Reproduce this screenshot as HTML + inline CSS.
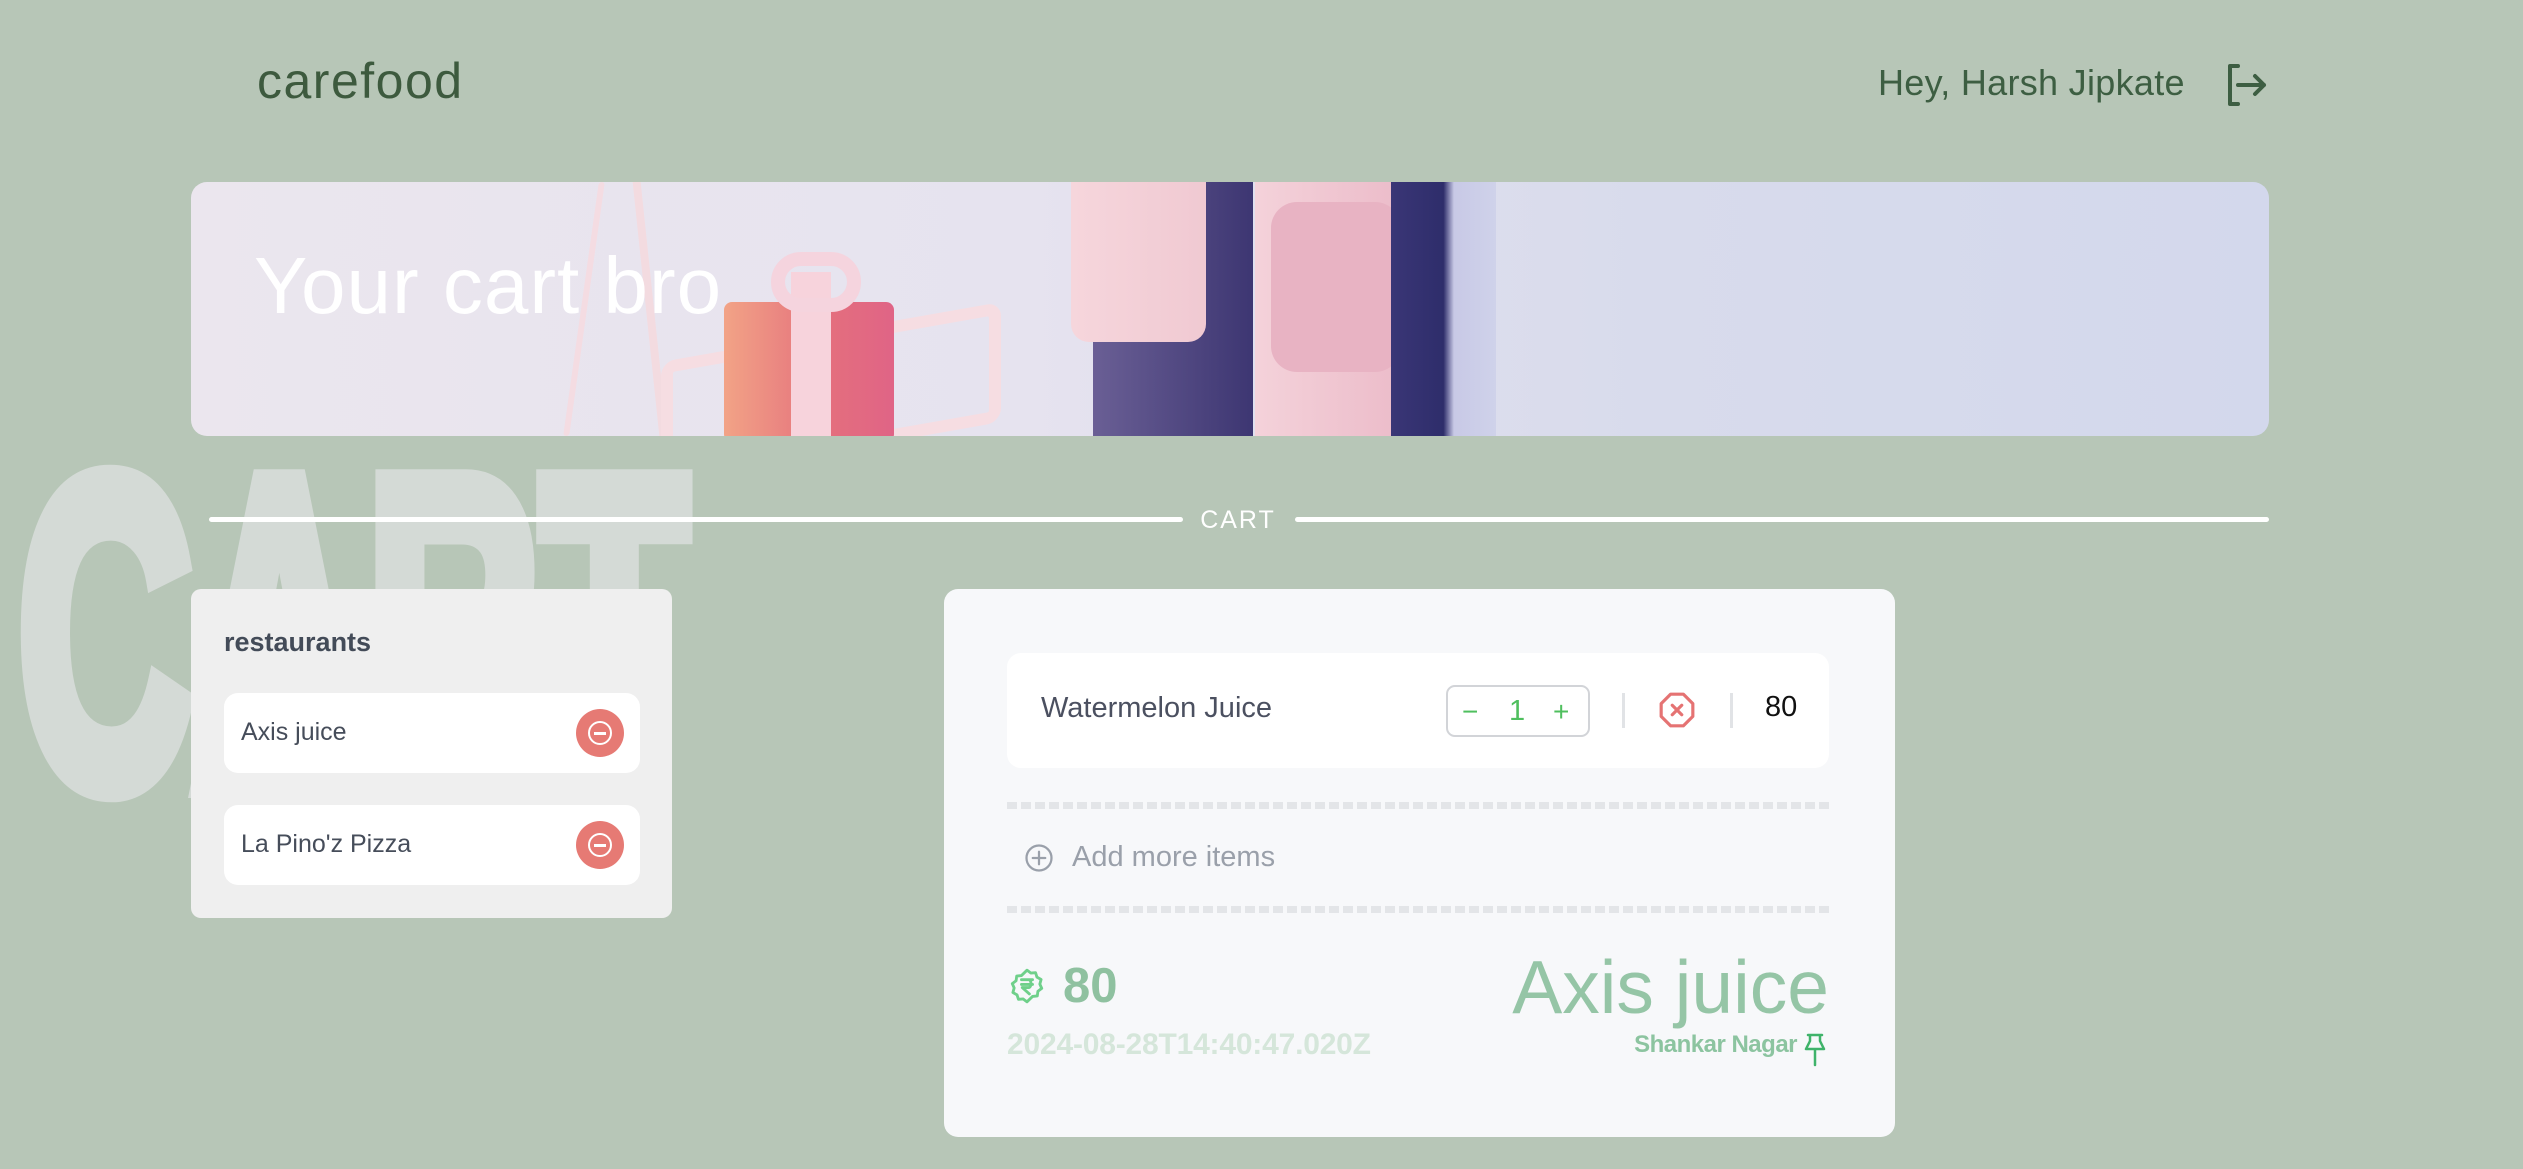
<!DOCTYPE html>
<html><head><meta charset="utf-8">
<style>
*{margin:0;padding:0;box-sizing:border-box}
body{width:2523px;height:1169px;background:#b7c6b7;font-family:"Liberation Sans",sans-serif;position:relative;overflow:hidden}
.abs{position:absolute}
.logo{left:257px;top:52px;font-size:50px;color:#3d5a3e;letter-spacing:1.5px}
.hey{left:1878px;top:62px;font-size:36px;color:#3d5e42;letter-spacing:0.3px}
.banner{left:191px;top:182px;width:2078px;height:254px;border-radius:16px;overflow:hidden;background:linear-gradient(90deg,#ebe6ee 0%,#e6e3ef 40%,#d8dbec 70%,#d3d8ec 100%)}
.banner h1{position:absolute;left:63px;top:58px;font-size:80px;font-weight:normal;color:#fff;letter-spacing:1px}
.line{height:5px;background:#fff;border-radius:3px;top:517px}
.carttxt{left:1200px;top:506px;width:76px;text-align:center;color:#fff;font-size:25px;letter-spacing:2px}
.rcard{left:191px;top:589px;width:481px;height:329px;background:#efefef;border-radius:10px}
.rcard h3{position:absolute;left:33px;top:38px;font-size:27px;color:#434b58}
.ritem{position:absolute;left:33px;width:416px;height:80px;background:#fff;border-radius:14px}
.ritem span{position:absolute;left:17px;top:25px;font-size:25px;color:#464d5a}
.ritem i{position:absolute;left:352px;top:16px;width:48px;height:48px;border-radius:50%;background:#e67a74}
.ritem i:before{content:"";position:absolute;left:12px;top:12px;width:20px;height:20px;border:2.5px solid #fff;border-radius:50%}
.ritem i:after{content:"";position:absolute;left:18px;top:22.5px;width:12px;height:3px;background:#fff}
.mcard{left:944px;top:589px;width:951px;height:548px;background:#f7f8fa;border-radius:14px}
.row{left:1007px;top:653px;width:822px;height:115px;background:#fff;border-radius:14px}
.dash{height:7px;left:1007px;width:822px;background:repeating-linear-gradient(90deg,#e3e5e8 0 10px,transparent 10px 14px)}
</style></head><body>
<svg class="abs" style="left:0;top:0" width="760" height="830"><text x="18" y="785" font-family="Liberation Sans" font-weight="bold" font-size="440" fill="#d4dad6" stroke="#d4dad6" stroke-width="26" stroke-linejoin="miter" textLength="670" lengthAdjust="spacingAndGlyphs">CART</text></svg>
<div class="abs logo">carefood</div>
<div class="abs hey">Hey, Harsh Jipkate</div>
<svg class="abs" style="left:2224px;top:63px" width="44" height="44" viewBox="0 0 44 44" fill="none" stroke="#3d5e42" stroke-width="4" stroke-linecap="round" stroke-linejoin="round"><path d="M14 3H6v38h8"/><path d="M14 22h26M31 13l9 9-9 9"/></svg>
<div class="abs banner">
 <div class="abs" style="left:390px;top:0;width:6px;height:254px;background:#f4dce2;transform:skewX(-8deg);border-radius:3px"></div>
 <div class="abs" style="left:455px;top:0;width:8px;height:254px;background:#f3dbe0;transform:skewX(6deg)"></div>
 <div class="abs" style="left:470px;top:150px;width:340px;height:120px;border:12px solid #f6dde2;border-radius:14px;transform:skewY(-10deg)"></div>
 <div class="abs" style="left:533px;top:120px;width:170px;height:140px;background:linear-gradient(90deg,#f2a386,#e46f7d 60%,#e06486);border-radius:8px"></div>
 <div class="abs" style="left:600px;top:90px;width:40px;height:164px;background:#f7d3dc"></div>
 <div class="abs" style="left:580px;top:70px;width:90px;height:60px;border:14px solid #f5d4de;border-radius:40px"></div>
 <div class="abs" style="left:902px;top:0;width:160px;height:254px;background:linear-gradient(90deg,#6a5f95,#3d3672)"></div>
 <div class="abs" style="left:880px;top:0;width:135px;height:160px;background:linear-gradient(90deg,#f6d6dc,#f0c9d2);border-radius:0 0 18px 18px"></div>
 <div class="abs" style="left:1064px;top:0;width:176px;height:254px;background:linear-gradient(90deg,#f4d2da,#eab7c6)"></div>
 <div class="abs" style="left:1080px;top:20px;width:130px;height:170px;background:#e8b3c3;border-radius:26px"></div>
 <div class="abs" style="left:1200px;top:0;width:105px;height:254px;background:linear-gradient(90deg,#3a3676,#2e2d6b 50%,#c8c9e6 60%,#cfd2ea)"></div>
 <h1>Your cart bro</h1>
</div>
<div class="abs line" style="left:209px;width:974px"></div>
<div class="abs line" style="left:1295px;width:974px"></div>
<div class="abs carttxt">CART</div>
<div class="abs rcard">
 <h3>restaurants</h3>
 <div class="ritem" style="top:104px"><span>Axis juice</span><i></i></div>
 <div class="ritem" style="top:216px"><span>La Pino'z Pizza</span><i></i></div>
</div>
<div class="abs mcard"></div>
<div class="abs row">
 <span class="abs" style="left:34px;top:39px;font-size:29px;color:#4b5060">Watermelon Juice</span>
 <div class="abs" style="left:439px;top:32px;width:144px;height:52px;border:2px solid #d2d4d8;border-radius:9px;color:#4fbf5e">
  <span class="abs" style="left:14px;top:9px;font-size:28px">−</span>
  <span class="abs" style="left:61px;top:8px;font-size:29px">1</span>
  <span class="abs" style="left:105px;top:9px;font-size:28px">+</span>
 </div>
 <div class="abs" style="left:615px;top:40px;width:3px;height:35px;background:#e1e3e6"></div>
 <svg class="abs" style="left:651px;top:38px" width="38" height="38" viewBox="0 0 24 24" fill="none" stroke="#e57373" stroke-width="2" stroke-linejoin="round" stroke-linecap="round"><path d="M8 2h8l6 6v8l-6 6H8l-6-6V8z"/><path d="M9 9l6 6M15 9l-6 6"/></svg>
 <div class="abs" style="left:723px;top:40px;width:3px;height:35px;background:#e1e3e6"></div>
 <span class="abs" style="left:758px;top:38px;font-size:29px;color:#111">80</span>
</div>
<div class="abs dash" style="top:802px"></div>
<svg class="abs" style="left:1024px;top:843px" width="30" height="30" viewBox="0 0 24 24" fill="none" stroke="#9aa0aa" stroke-width="1.8" stroke-linecap="round"><circle cx="12" cy="12" r="10"/><path d="M12 7v10M7 12h10"/></svg>
<span class="abs" style="left:1072px;top:841px;font-size:29px;color:#9aa0aa">Add more items</span>
<div class="abs dash" style="top:906px"></div>
<svg class="abs" style="left:1008px;top:967px" width="38" height="38" viewBox="0 0 24 24" fill="none" stroke="#6fd08a" stroke-width="1.8" stroke-linecap="round" stroke-linejoin="round"><path d="M12 2l2.4 1.8 3-.2.9 2.8 2.6 1.5-.8 2.9 1.2 2.7-2.4 1.8-.4 3-3 .3L12 22l-2.4-1.8-3 .2-.9-2.8-2.6-1.5.8-2.9L2.7 10.5l2.4-1.8.4-3 3-.3z"/><path d="M8.5 8h7M8.5 11h7M13 8c2 0 2 5 0 5h-4l4.5 4"/></svg>
<span class="abs" style="left:1063px;top:958px;font-size:49px;font-weight:bold;color:#8fc1a0">80</span>
<span class="abs" style="left:1007px;top:1028px;font-size:30px;font-weight:bold;color:#d5e6da;letter-spacing:-0.2px">2024-08-28T14:40:47.020Z</span>
<span class="abs" style="right:694px;top:944px;font-size:75px;color:#95c5a6;letter-spacing:0px">Axis juice</span>
<span class="abs" style="right:726px;top:1031px;font-size:24px;font-weight:bold;color:#8cc4a0;letter-spacing:-0.5px">Shankar Nagar</span>
<svg class="abs" style="left:1802px;top:1033px" width="26" height="34" viewBox="0 0 26 34" fill="none" stroke="#3fb36a" stroke-width="2.5" stroke-linejoin="round" stroke-linecap="round"><path d="M6 2h14M8 2v6l-4 8h18l-4-8V2M13 16v16"/></svg>
</body></html>
